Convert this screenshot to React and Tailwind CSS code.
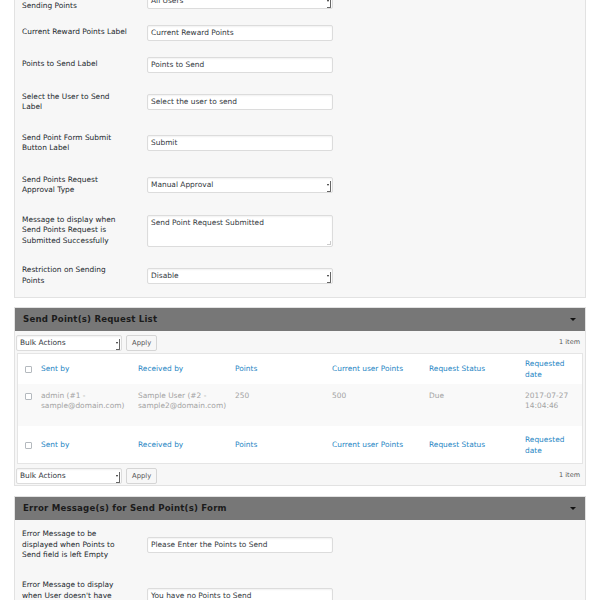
import React from "react";

const Select = ({ text, w = "w-[186px]" }) => (
  <div
    className={`relative flex h-[16px] ${w} items-center rounded-[2px] border border-[#dcdcdc] bg-white pl-[3px] text-[#32373c] shadow-[inset_0_1px_2px_rgba(0,0,0,0.06)]`}
  >
    {text}
    <span className="absolute right-[1px] top-[3px] h-[11px] w-[4px] rounded-br-[1px] border-r-[1.5px] border-b border-[#666]" />
    <span className="absolute right-[3px] top-[6px] h-0 w-0 border-x-[1.5px] border-t-[2px] border-x-transparent border-t-[#222]" />
  </div>
);

const Input = ({ text }) => (
  <div className="flex h-[16px] w-[186px] items-center rounded-[2px] border border-[#dcdcdc] bg-white pl-[3px] text-[#32373c] shadow-[inset_0_1px_2px_rgba(0,0,0,0.06)]">
    {text}
  </div>
);

const Row = ({ label, h, children }) => (
  <div className={`flex items-center ${h}`}>
    <div className="w-[115px] shrink-0 mr-[10px] leading-[10.4px] text-[#23282d]">{label}</div>
    {children}
  </div>
);

const Header = ({ title }) => (
  <div className="flex h-[23px] items-center justify-between bg-[#777] pl-[8px] pr-[9px]">
    <span className="text-[8.6px] font-bold tracking-[0.2px] text-[#1b1b1b]">{title}</span>
    <span className="h-0 w-0 border-x-[3px] border-t-[3px] border-x-transparent border-t-[#111]" />
  </div>
);

const Check = () => (
  <span className="mt-[1px] block h-[7px] w-[7px] rounded-[1px] border border-[#b4b9be] bg-white" />
);

const cols = "grid grid-cols-[23px_97px_97px_97px_97px_96px_1fr]";

const HeadRow = ({ h }) => (
  <div className={`${cols} ${h} items-center text-[#1f86c4]`}>
    <div className="pl-[7px]"><Check /></div>
    <div>Sent by</div>
    <div>Received by</div>
    <div>Points</div>
    <div>Current user Points</div>
    <div>Request Status</div>
    <div className="leading-[11px]">Requested<br />date</div>
  </div>
);

const Toolbar = () => (
  <div className="flex h-[16px] items-center justify-between pl-[1px] pr-[5px]">
    <div className="flex items-center gap-[4px]">
      <Select text="Bulk Actions" w="w-[106px]" />
      <div className="flex h-[16px] items-center rounded-[2px] border border-[#d5d5d5] bg-[#f7f7f7] px-[5px] text-[6.8px] text-[#555]">
        Apply
      </div>
    </div>
    <span className="text-[6.5px] text-[#555]">1 item</span>
  </div>
);

export default function App() {
  return (
    <div className="h-[600px] overflow-hidden bg-white font-['DejaVu_Sans',sans-serif] text-[7.43px]">
      <div className="mx-[14px] -mt-[16px] border border-[#e2e2e2] bg-[#f7f7f7] pl-[7px]">
        <Row h="h-[32px]" label={<>Restriction Type of<br />Sending Points</>}>
          <Select text="All Users" />
        </Row>
        <Row h="h-[31px]" label="Current Reward Points Label">
          <Input text="Current Reward Points" />
        </Row>
        <Row h="h-[33px]" label="Points to Send Label">
          <Input text="Points to Send" />
        </Row>
        <Row h="h-[42px]" label={<>Select the User to Send<br />Label</>}>
          <Input text="Select the user to send" />
        </Row>
        <Row h="h-[40px]" label={<>Send Point Form Submit<br />Button Label</>}>
          <Input text="Submit" />
        </Row>
        <Row h="h-[44px]" label={<>Send Points Request<br />Approval Type</>}>
          <Select text="Manual Approval" />
        </Row>
        <Row h="h-[47px]" label={<>Message to display when<br />Send Points Request is<br />Submitted Successfully</>}>
          <div className="relative h-[32px] w-[186px] rounded-[2px] border border-[#dcdcdc] bg-white pl-[3px] pt-[1px] text-[#32373c] shadow-[inset_0_1px_2px_rgba(0,0,0,0.06)]">
            Send Point Request Submitted
            <span className="absolute bottom-[1px] right-[1px] h-[4px] w-[4px] border-r border-b border-[#ccc]" />
          </div>
        </Row>
        <Row h="h-[43px]" label={<>Restriction on Sending<br />Points</>}>
          <Select text="Disable" />
        </Row>
      </div>

      <div className="mx-[14px] mt-[9px] border border-[#e2e2e2] bg-[#f7f7f7]">
        <Header title="Send Point(s) Request List" />
        <div className="pt-[4px] pb-[1px]">
          <Toolbar />
          <div className="mx-[2px] mt-[2px] mb-[4px] border border-[#e5e5e5] bg-white">
            <HeadRow h="h-[30px]" />
            <div className={`${cols} h-[42px] items-start bg-[#f9f9f9] pt-[7px] leading-[10.4px] text-[#a3a3a3]`}>
              <div className="pl-[7px] pt-[1px]"><Check /></div>
              <div>admin (#1 -<br />sample@domain.com)</div>
              <div>Sample User (#2 -<br />sample2@domain.com)</div>
              <div>250</div>
              <div>500</div>
              <div>Due</div>
              <div>2017-07-27<br />14:04:46</div>
            </div>
            <HeadRow h="h-[37px]" />
          </div>
          <Toolbar />
        </div>
      </div>

      <div className="mx-[14px] mt-[10px] border border-[#e2e2e2] bg-[#f7f7f7] pb-[20px]">
        <Header title="Error Message(s) for Send Point(s) Form" />
        <div className="pl-[7px]">
          <Row h="h-[50px]" label={<>Error Message to be<br />displayed when Points to<br />Send field is left Empty</>}>
            <Input text="Please Enter the Points to Send" />
          </Row>
          <Row h="h-[52px]" label={<>Error Message to display<br />when User doesn't have<br />Points to Send</>}>
            <Input text="You have no Points to Send" />
          </Row>
        </div>
      </div>
    </div>
  );
}
